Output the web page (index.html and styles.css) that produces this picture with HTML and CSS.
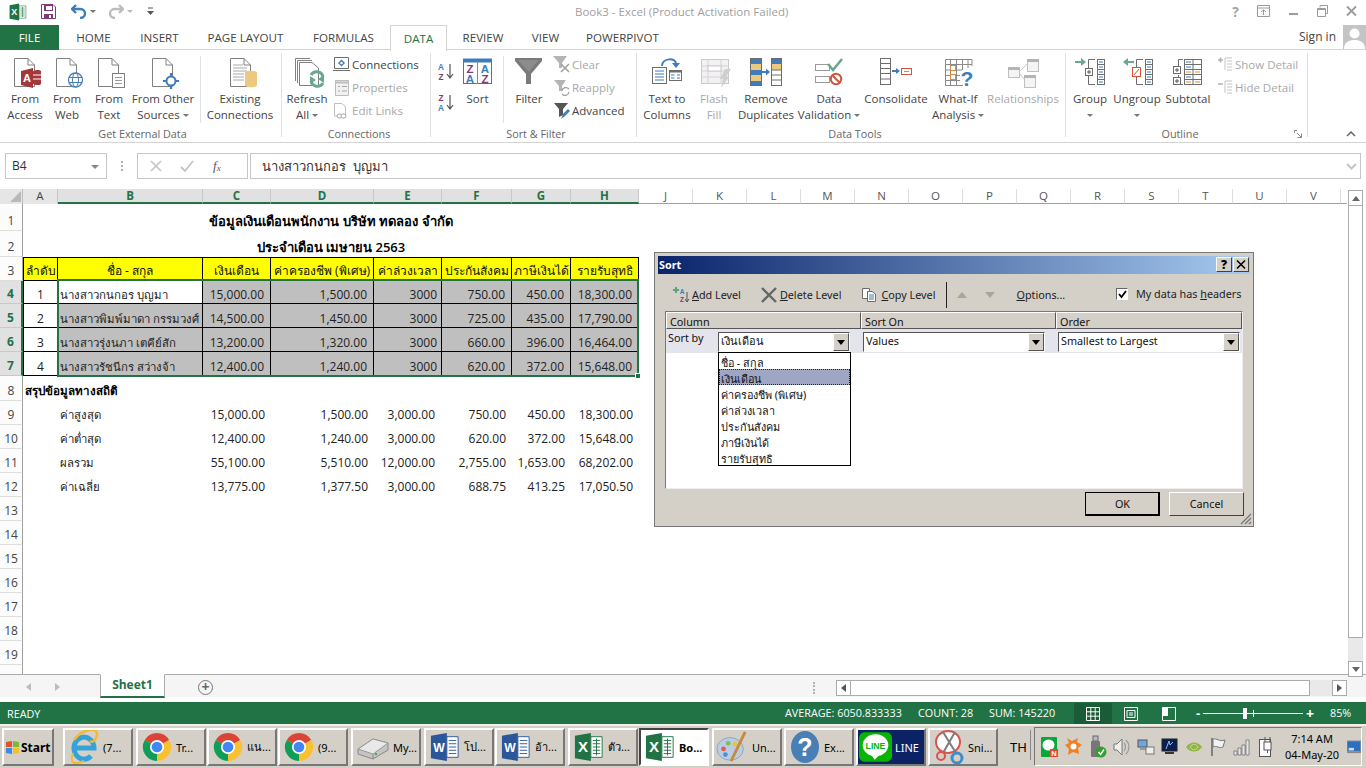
FILE: index.html
```html
<!DOCTYPE html>
<html lang="th">
<head>
<meta charset="utf-8">
<title>Book3 - Excel</title>
<link rel="stylesheet" href="styles.css">
</head>
<body>
<svg class="defs" width="0" height="0">
  <defs>
    <symbol id="chrome" viewBox="0 0 32 32">
      <path d="M16 16 3 8.5A15 15 0 0 1 29 8.5Z" fill="#db4437"/>
      <path d="M16 16 29 8.5A15 15 0 0 1 16 31Z" fill="#fbc02d"/>
      <path d="M16 16 16 31A15 15 0 0 1 3 8.5Z" fill="#0f9d58"/>
      <circle cx="16" cy="16" r="7.5" fill="#fff"/>
      <circle cx="16" cy="16" r="5.7" fill="#4285f4"/>
    </symbol>
    <symbol id="word" viewBox="0 0 32 32">
      <path d="M1 4 18 1V31L1 28Z" fill="#2b579a"/>
      <path d="M18 5H30V27H18Z" fill="#fff" stroke="#2b579a"/>
      <path d="M20 9H28M20 12.500H28M20 16H28M20 19.500H28M20 23H28" stroke="#2b579a"/>
      <text x="9.500" y="21" class="ico-b" font-size="13" fill="#fff" text-anchor="middle">W</text>
    </symbol>
    <symbol id="xl" viewBox="0 0 32 32">
      <path d="M1 4 18 1V31L1 28Z" fill="#217346"/>
      <path d="M18 5H30V27H18Z" fill="#fff" stroke="#217346"/>
      <path d="M20 9H28M20 12.500H28M20 16H28M20 19.500H28M20 23H28M24 7V25" stroke="#217346"/>
      <text x="9.500" y="21.500" class="ico-b" font-size="16" fill="#fff" text-anchor="middle">X</text>
    </symbol>
    <symbol id="doc" viewBox="0 0 21 29">
      <path d="M.5.500H14L20.500 7V28.500H.5Z" fill="#fff" stroke="#808080"/>
      <path d="M14 .5V7H20.500" fill="none" stroke="#808080"/>
    </symbol>
  </defs>
</svg>

<header class="titlebar">
  <div class="qat">
    <svg class="q-xl" width="18" height="18" viewBox="0 0 32 32"><use href="#xl"/></svg>
    <svg class="q-save" width="15" height="15" viewBox="0 0 15 15"><path d="M.5.500H12L14.500 3V14.500H.5Z" fill="#fff" stroke="#80397b"/><path d="M1 1H12V7H3V1ZM3 10H12V14.500H3Z" fill="#80397b"/><rect x="5" y="2" width="6" height="4" fill="#fff"/><rect x="8" y="11" width="2" height="3" fill="#fff"/></svg>
    <svg class="q-undo" width="16" height="15" viewBox="0 0 16 15"><path d="M5 1 1 5 5 9M1.500 5H9C13 5 14 8 14 9.500 14 12 12 14 9 14" fill="none" stroke="#3f7cbc" stroke-width="2.400"/></svg>
    <i class="caret q-c1"></i>
    <svg class="q-redo" width="16" height="15" viewBox="0 0 16 15"><path d="M11 1 15 5 11 9M14.500 5H7C3 5 2 8 2 9.500 2 12 4 14 7 14" fill="none" stroke="#bdbdbd" stroke-width="2.400"/></svg>
    <i class="caret q-c2 off"></i>
    <svg class="q-cust" width="7" height="9" viewBox="0 0 7 9"><path d="M1 1H6" stroke="#555"/><path d="M0 4H7L3.500 8Z" fill="#555"/></svg>
  </div>
  <div class="doc-title">Book3 - Excel (Product Activation Failed)</div>
  <div class="winctl">
    <span class="help">?</span>
    <svg width="13" height="12" viewBox="0 0 13 12"><path d="M.5.500H12.500V11.500H.5ZM.5 3H12.500M6.500 10V5M4 7 6.500 4.800 9 7" fill="none" stroke="#9b9b9b"/></svg>
    <svg width="11" height="12" viewBox="0 0 11 12"><path d="M1 9H10" stroke="#9b9b9b" stroke-width="2"/></svg>
    <svg width="11" height="12" viewBox="0 0 11 12"><path d="M3 2.500V.5H10.500V8.500H8.500M.5 3.500H8.500V11.500H.5ZM.5 4.500H8.500" fill="none" stroke="#9b9b9b"/></svg>
    <svg width="11" height="12" viewBox="0 0 11 12"><path d="M1 1.500 10 10.500M10 1.500 1 10.500" stroke="#9b9b9b" stroke-width="1.800"/></svg>
  </div>
</header>

<nav class="tabs">
  <div class="tab t-file">FILE</div>
  <div class="tab t-home">HOME</div>
  <div class="tab t-ins">INSERT</div>
  <div class="tab t-pl">PAGE LAYOUT</div>
  <div class="tab t-form">FORMULAS</div>
  <div class="tab t-data">DATA</div>
  <div class="tab t-rev">REVIEW</div>
  <div class="tab t-view">VIEW</div>
  <div class="tab t-pp">POWERPIVOT</div>
  <div class="signin">Sign in</div>
  <svg class="avatar" width="23" height="24" viewBox="0 0 23 24"><rect width="23" height="24" fill="#c4c4c4"/><circle cx="11.500" cy="8.500" r="5" fill="#fff"/><path d="M1 24C1 17 6 15 11.500 15S22 17 22 24Z" fill="#fff"/></svg>
</nav>

<section class="ribbon">
  <div class="group g1">
    <div class="gbody">
      <div class="big w42"><svg width="42" height="38" viewBox="4 53 42 38"><use href="#doc" x="14" y="58" width="21" height="29"/><path d="M33 71H41V84H33Z" fill="#fff"/><path d="M33 71.500C35 69.500 41 69.500 41 71.500V83.500C41 85.500 35 85.500 33 83.500Z" fill="#a4373a"/><path d="M33 75 41 75M33 79 41 79" stroke="#fff"/><path d="M21 71 33 68V88L21 85Z" fill="#a4373a"/><text x="27" y="82" class="ico-b" font-size="11" fill="#fff" text-anchor="middle">A</text></svg><span>From<br>Access</span></div>
      <div class="big w42"><svg width="42" height="38" viewBox="46 53 42 38"><use href="#doc" x="56" y="58" width="21" height="29"/><circle cx="75.500" cy="80" r="7" fill="#fff" stroke="#4a7fb5" stroke-width="1.300"/><ellipse cx="75.500" cy="80" rx="3" ry="7" fill="none" stroke="#4a7fb5"/><path d="M69 77.500H82M69 82.500H82" stroke="#4a7fb5"/></svg><span>From<br>Web</span></div>
      <div class="big w42"><svg width="42" height="38" viewBox="88 53 42 38"><use href="#doc" x="98" y="58" width="21" height="29"/><rect x="112.500" y="73.500" width="12" height="14" fill="#fff" stroke="#808080"/><path d="M115 77.500H122M115 80.500H122M115 83.500H122" stroke="#9a9a9a"/></svg><span>From<br>Text</span></div>
      <div class="big w66"><svg width="66" height="38" viewBox="130 53 66 38"><use href="#doc" x="152" y="58" width="21" height="29"/><circle cx="171" cy="81" r="4.500" fill="#fff" stroke="#3f7cbc" stroke-width="2"/><path d="M163 81H167M175 81H179M171 73V77M171 85V89" stroke="#3f7cbc" stroke-width="2.200"/></svg><span>From Other<br>Sources<i class="caret"></i></span></div>
      <div class="vsep s1"></div>
      <div class="big w72"><svg width="72" height="38" viewBox="204 53 72 38"><use href="#doc" x="230" y="58" width="21" height="29"/><path d="M233 65H243M233 68H247M233 71H247M233 74H244M233 77H244M233 80H244" stroke="#a8a8a8"/><path d="M245 73C245 70 257 70 257 73V85C257 88 245 88 245 85Z" fill="#edc87e"/></svg><span>Existing<br>Connections</span></div>
    </div>
    <div class="glabel">Get External Data</div>
  </div>

  <div class="group g2">
    <div class="gbody">
      <div class="big w38"><svg width="38" height="38" viewBox="288 53 38 38"><path d="M295.500 58.500H310M297.500 60.500H312M295.500 58.500V81M297.500 60.500V83" fill="none" stroke="#808080"/><path d="M299.500 62.500H312L318.500 68V85.500H299.500Z" fill="#fff" stroke="#808080"/><path d="M311 75A6.500 6.500 0 0 1 323 77" fill="none" stroke="#6aa78e" stroke-width="3"/><path d="M324 83 324 75 318 79Z" fill="#6aa78e"/><path d="M323 83A6.500 6.500 0 0 1 311 81" fill="none" stroke="#6aa78e" stroke-width="3"/><path d="M310 76V84L316 80Z" fill="#6aa78e"/></svg><span>Refresh<br>All<i class="caret"></i></span></div>
      <div class="small-col">
        <div class="sm"><svg width="19" height="18" viewBox="0 0 19 18"><path d="M1.500 1.500H15.500V12.500H1.500ZM0 14.500H17" fill="#fff" stroke="#6d6d6d"/><path d="M8.500 3.500 12 7 8.500 10.500 5 7Z" fill="#3f7cbc"/><circle cx="8.500" cy="7" r="1.300" fill="#fff"/></svg>Connections</div>
        <div class="sm off"><svg width="19" height="18" viewBox="0 0 19 18"><path d="M2.500 1.500H15.500V16.500H2.500Z" fill="#f1f1f1" stroke="#bdbdbd"/><path d="M2.500 3.500H15.500" stroke="#bdbdbd" stroke-width="2"/><path d="M5 7.500H7M9 7.500H14M5 12H7M9 12H14" stroke="#a8a8a8"/></svg>Properties</div>
        <div class="sm off"><svg class="ind" width="15" height="18" viewBox="0 0 15 18"><path d="M1.500 1.500H9L12.500 5V14H1.500Z" fill="#fff" stroke="#bdbdbd"/><rect x="4" y="12" width="5" height="4" rx="2" fill="#fff" stroke="#a8a8a8"/><rect x="8" y="12" width="5" height="4" rx="2" fill="#fff" stroke="#a8a8a8"/></svg>Edit Links</div>
      </div>
    </div>
    <div class="glabel">Connections</div>
  </div>

  <div class="group g3">
    <div class="gbody">
      <div class="az-col">
        <svg width="22" height="18" viewBox="0 0 22 18"><text x="5" y="7" class="ico-m" font-size="8.200" fill="#3f7cbc" text-anchor="middle">A</text><text x="5" y="16.500" class="ico-m" font-size="8.200" fill="#80397b" text-anchor="middle">Z</text><path d="M14 1V14M11 11 14 15 17 11" fill="none" stroke="#555" stroke-width="1.200"/></svg>
        <svg width="22" height="18" viewBox="0 0 22 18"><text x="5" y="7" class="ico-m" font-size="8.200" fill="#80397b" text-anchor="middle">Z</text><text x="5" y="16.500" class="ico-m" font-size="8.200" fill="#3f7cbc" text-anchor="middle">A</text><path d="M14 1V14M11 11 14 15 17 11" fill="none" stroke="#555" stroke-width="1.200"/></svg>
      </div>
      <div class="big w39"><svg width="39" height="38" viewBox="458 53 39 38"><rect x="463.500" y="59.500" width="28" height="24" fill="#fff" stroke="#6d6d6d"/><rect x="463" y="58.500" width="29" height="4" fill="#3f7cbc"/><path d="M477.500 62V84" stroke="#8a8a8a"/><text x="470" y="72.500" class="ico-m" font-size="11.500" fill="#80397b" text-anchor="middle">Z</text><text x="470" y="82.500" class="ico-m" font-size="11.500" fill="#3f7cbc" text-anchor="middle">A</text><text x="485" y="72.500" class="ico-m" font-size="11.500" fill="#3f7cbc" text-anchor="middle">A</text><text x="485" y="82.500" class="ico-m" font-size="11.500" fill="#80397b" text-anchor="middle">Z</text></svg><span>Sort</span></div>
      <div class="vsep s2"></div>
      <div class="big w42"><svg width="42" height="38" viewBox="508 53 42 38"><path d="M515 58H542V61L531 74V84H526V74L515 61Z" fill="#7a7a7a"/><path d="M518 60H539L529 71 528 71Z" fill="#8c8c8c"/></svg><span>Filter</span></div>
      <div class="small-col c3">
        <div class="sm off"><svg width="19" height="20" viewBox="0 0 19 20"><path d="M0 1H14L9 8V13H6V8Z" fill="#b4b4b4"/><path d="M8 9 16 17M16 9 8 17" stroke="#a0a0a0" stroke-width="1.600"/></svg>Clear</div>
        <div class="sm off"><svg width="19" height="20" viewBox="0 0 19 20"><path d="M1 2H13L9 8V13H6V8Z" fill="#b4b4b4"/><path d="M9 13A4 4 0 0 1 16 11M16 14A4 4 0 0 1 9 16" fill="none" stroke="#a0a0a0" stroke-width="1.300"/></svg>Reapply</div>
        <div class="sm"><svg width="19" height="20" viewBox="0 0 19 20"><path d="M1 2H15L10 8V14L6 16V8Z" fill="#555"/><path d="M8 18 10 13 15 8 17 10 12 15Z" fill="#3f7cbc"/></svg>Advanced</div>
      </div>
    </div>
    <div class="glabel">Sort &amp; Filter</div>
  </div>

  <div class="group g4">
    <div class="gbody">
      <div class="big w44"><svg width="44" height="38" viewBox="645 53 44 38"><rect x="652.500" y="67.500" width="14" height="16" fill="#fff" stroke="#6d6d6d"/><path d="M655 71H664M655 74H664M655 77H664M655 80H664" stroke="#3f7cbc"/><path d="M662 66C662 58 676 57 676 64" fill="none" stroke="#3f7cbc" stroke-width="2"/><path d="M672 63H680L676 68Z" fill="#3f7cbc"/><rect x="669.500" y="70.500" width="12" height="10" fill="#fff" stroke="#6d6d6d"/><rect x="669.500" y="70.500" width="12" height="2" fill="#6d6d6d"/><path d="M671 75H674.500M677 75H680M671 78H674.500M677 78H680" stroke="#3f7cbc"/></svg><span>Text to<br>Columns</span></div>
      <div class="big w50 dis"><svg width="50" height="38" viewBox="689 53 50 38"><rect x="701.500" y="59.500" width="27" height="24" fill="#f4f1f4" stroke="#c9c9c9"/><path d="M701 66H729M701 71H729M701 77H729M708 59V84M721 59V84" stroke="#d6d2d6"/><rect x="708" y="66" width="13" height="5" fill="#fff" stroke="#c9c9c9"/><path d="M725 69H731L726 77H729L721 88 723 79H720Z" fill="#cfcfcf"/></svg><span>Flash<br>Fill</span></div>
      <div class="big w54"><svg width="54" height="38" viewBox="739 53 54 38"><rect x="750.500" y="58.500" width="11" height="27" fill="#fff" stroke="#6d6d6d"/><path d="M751 59H761V64H751ZM751 70H761V75H751ZM751 81H761V85H751Z" fill="#3f7cbc"/><path d="M751 64H761V70H751ZM751 75H761V81H751Z" fill="#edc87e"/><path d="M762 72H767" stroke="#3f7cbc" stroke-width="2"/><path d="M766 68.500 770 72 766 75.500Z" fill="#3f7cbc"/><rect x="771.500" y="58.500" width="10" height="27" fill="#fff" stroke="#6d6d6d"/><path d="M772 59H781V64H772Z" fill="#3f7cbc"/><path d="M772 64H781V70H772Z" fill="#edc87e"/><path d="M772 70H781M772 75H781M772 80H781" stroke="#6d6d6d"/></svg><span>Remove<br>Duplicates</span></div>
      <div class="big w72"><svg width="72" height="38" viewBox="793 53 72 38"><rect x="815.500" y="64.500" width="14" height="6" fill="#fff" stroke="#9a9a9a"/><rect x="815.500" y="76.500" width="14" height="6" fill="#fff" stroke="#9a9a9a"/><path d="M828 64 833 70 842 59" fill="none" stroke="#6aa78e" stroke-width="2.600"/><circle cx="836" cy="79" r="5.200" fill="#fff" stroke="#d2553a" stroke-width="2"/><path d="M832.500 75.500 839.500 82.500" stroke="#d2553a" stroke-width="2"/></svg><span>Data<br>Validation<i class="caret"></i></span></div>
      <div class="big w62"><svg width="62" height="38" viewBox="865 53 62 38"><rect x="880.500" y="58.500" width="10" height="26" fill="#fff" stroke="#6d6d6d"/><path d="M881 63.500H890M881 68.500H890M881 73.500H890M881 79H890" stroke="#6d6d6d"/><path d="M892 71H897" stroke="#3f7cbc" stroke-width="2"/><path d="M896 68 900 71 896 74Z" fill="#3f7cbc"/><rect x="901.500" y="68.500" width="10" height="6" fill="#fff" stroke="#d2553a"/><path d="M904 71.500H909" stroke="#999"/></svg><span>Consolidate</span></div>
      <div class="big w62"><svg width="62" height="38" viewBox="927 53 62 38"><path d="M945.500 59.500H972V66M945.500 59.500V85.500H963M950.500 60V85M956.500 60V85M962.500 60V70M968 60V68M946 64.500H972M946 70H962M946 75.500H960M946 80.500H960" fill="none" stroke="#8a8a8a"/><rect x="950.500" y="65.500" width="5" height="5" fill="#fff" stroke="#e08a3c"/><rect x="950.500" y="74.500" width="5" height="5" fill="#fff" stroke="#e08a3c"/><text x="967" y="86" class="ico-b" font-size="21" fill="#3f7cbc" text-anchor="middle">?</text></svg><span>What-If<br>Analysis<i class="caret"></i></span></div>
      <div class="big w68 dis"><svg width="68" height="38" viewBox="989 53 68 38"><rect x="1008.500" y="67.500" width="11" height="10" fill="#f4f4f4" stroke="#c0c0c0"/><rect x="1008" y="67" width="12" height="3" fill="#b4b4b4"/><rect x="1027.500" y="59.500" width="11" height="12" fill="#f4f4f4" stroke="#c0c0c0"/><rect x="1027" y="59" width="12" height="3" fill="#b4b4b4"/><rect x="1024.500" y="75.500" width="11" height="12" fill="#f4f4f4" stroke="#c0c0c0"/><rect x="1024" y="75" width="12" height="3" fill="#b4b4b4"/><path d="M1020 71 1027 64M1020 74 1024 79" stroke="#c9c9c9"/></svg><span>Relationships</span></div>
    </div>
    <div class="glabel">Data Tools</div>
  </div>

  <div class="group g5">
    <div class="gbody">
      <div class="big w40"><svg width="40" height="38" viewBox="1070 53 40 38"><path d="M1075 62H1083" stroke="#6aa78e" stroke-width="2"/><path d="M1081 58 1086 62 1081 66Z" fill="#6aa78e"/><path d="M1095 59.500H1088.500V68M1088.500 75V84.500H1095" fill="none" stroke="#6d6d6d"/><rect x="1085.500" y="68.500" width="7" height="7" fill="#fff" stroke="#6d6d6d"/><path d="M1087 72H1091M1089 70V74" stroke="#555"/><rect x="1097.500" y="59.500" width="7" height="25" fill="#fff" stroke="#6d6d6d"/><path d="M1098 64.500H1104M1098 69.500H1104M1098 74.500H1104M1098 79.500H1104" stroke="#6d6d6d"/><path d="M1099 62H1103M1099 67H1103M1099 72H1103M1099 77H1103M1099 82H1103" stroke="#3f7cbc"/></svg><span>Group<br><i class="caret solo"></i></span></div>
      <div class="big w54"><svg width="54" height="38" viewBox="1110 53 54 38"><path d="M1126 62H1134" stroke="#6aa78e" stroke-width="2"/><path d="M1128 58 1123 62 1128 66Z" fill="#6aa78e"/><path d="M1143 59.500H1136.500V67M1136.500 76V84.500H1143" fill="none" stroke="#6d6d6d"/><rect x="1132.500" y="67.500" width="8" height="9" fill="#fff" stroke="#d2553a"/><path d="M1134 75 1139 69" stroke="#d2553a"/><rect x="1145.500" y="59.500" width="7" height="25" fill="#fff" stroke="#6d6d6d"/><path d="M1146 64.500H1152M1146 69.500H1152M1146 74.500H1152M1146 79.500H1152" stroke="#6d6d6d"/><path d="M1147 62H1151M1147 67H1151M1147 72H1151M1147 77H1151M1147 82H1151" stroke="#3f7cbc"/></svg><span>Ungroup<br><i class="caret solo"></i></span></div>
      <div class="big w48"><svg width="48" height="38" viewBox="1164 53 48 38"><path d="M1183 59.500H1178.500V68M1178.500 75V78M1178.500 84.500H1183" fill="none" stroke="#6d6d6d"/><rect x="1173.500" y="66.500" width="7" height="7" fill="#fff" stroke="#6d6d6d"/><rect x="1173.500" y="77.500" width="7" height="7" fill="#fff" stroke="#6d6d6d"/><path d="M1175 70H1179M1177 68V72M1175 81H1179M1177 79V83" stroke="#555"/><rect x="1184.500" y="59.500" width="17" height="25" fill="#fff" stroke="#6d6d6d"/><path d="M1193 60V84M1185 64.500H1201M1185 69.500H1201M1185 74.500H1201M1185 79.500H1201" stroke="#6d6d6d"/><path d="M1186 62H1191M1186 67H1191M1186 77H1191" stroke="#3f7cbc"/><path d="M1186 72H1191M1195 72H1200M1186 82H1191M1195 82H1200" stroke="#e08a3c"/></svg><span>Subtotal</span></div>
      <div class="small-col c5">
        <div class="sm off"><svg width="18" height="18" viewBox="0 0 18 18"><path d="M1 4H6M3.500 1.500V6.500" stroke="#b0b0b0" stroke-width="1.500"/><path d="M8 2H15M10 5H15M10 8H15M10 11H15M10 14H15M8 2V14" stroke="#c4c4c4"/></svg>Show Detail</div>
        <div class="sm off"><svg width="18" height="18" viewBox="0 0 18 18"><path d="M1 5H6" stroke="#b0b0b0" stroke-width="1.500"/><path d="M8 2H15M10 5H15M10 8H15M10 11H15M10 14H15M8 2V14" stroke="#c4c4c4"/></svg>Hide Detail</div>
      </div>
    </div>
    <div class="glabel l5">Outline<svg class="launch" width="8" height="8" viewBox="0 0 8 8"><path d="M.5 3V.5H3M7.500 7.500 3 3M7.500 3.500V7.500H3.500" fill="none" stroke="#8a8a8a"/></svg></div>
  </div>
  <svg class="collapse" width="10" height="6" viewBox="0 0 10 6"><path d="M1 5 5 1 9 5" fill="none" stroke="#666" stroke-width="1.500"/></svg>
</section>

<section class="fbar">
  <div class="namebox">B4<i class="caret dark"></i></div>
  <div class="fdots"></div>
  <div class="fxbox">
    <svg width="12" height="12" viewBox="0 0 12 12"><path d="M1 1 11 11M11 1 1 11" stroke="#c4c4c4" stroke-width="1.600"/></svg>
    <svg width="14" height="12" viewBox="0 0 14 12"><path d="M1 7 5 11 13 1" fill="none" stroke="#c4c4c4" stroke-width="1.800"/></svg>
    <span class="fx">f<sub>x</sub></span>
  </div>
  <div class="finput">นางสาวกนกอร&nbsp;&nbsp;บุญมา<svg class="fexp" width="11" height="7" viewBox="0 0 11 7"><path d="M1 1 5.500 5.500 10 1" fill="none" stroke="#c4c4c4" stroke-width="2"/></svg></div>
</section>

<main class="book">
  <div class="sheet">
    <div class="colhead">
      <div class="corner"><svg width="12" height="12" viewBox="0 0 12 12"><path d="M12 1V12H1Z" fill="#b8b8b8"/></svg></div>
      <div class="ch">A</div><div class="ch on">B</div><div class="ch on">C</div><div class="ch on">D</div><div class="ch on">E</div><div class="ch on">F</div><div class="ch on">G</div><div class="ch on">H</div>
      <div class="ch lt">J</div><div class="ch lt">K</div><div class="ch lt">L</div><div class="ch lt">M</div><div class="ch lt">N</div><div class="ch lt">O</div><div class="ch lt">P</div><div class="ch lt">Q</div><div class="ch lt">R</div><div class="ch lt">S</div><div class="ch lt">T</div><div class="ch lt">U</div><div class="ch lt">V</div><div class="ch lt"></div>
    </div>

    <div class="row h27"><div class="rh">1</div><div class="cell merged strong">ข้อมูลเงินเดือนพนักงาน บริษัท ทดลอง จำกัด</div></div>
    <div class="row h26"><div class="rh">2</div><div class="cell merged strong">ประจำเดือน เมษายน 2563</div></div>
    <div class="row h24"><div class="rh">3</div><div class="cell th first">ลำดับ</div><div class="cell th">ชื่อ - สกุล</div><div class="cell th">เงินเดือน</div><div class="cell th">ค่าครองชีพ (พิเศษ)</div><div class="cell th">ค่าล่วงเวลา</div><div class="cell th">ประกันสังคม</div><div class="cell th">ภาษีเงินได้</div><div class="cell th">รายรับสุทธิ</div></div>
    <div class="row h23"><div class="rh sel">4</div><div class="cell td first mid">1</div><div class="cell td txt">นางสาวกนกอร บุญมา</div><div class="cell td gr num">15,000.00</div><div class="cell td gr num">1,500.00</div><div class="cell td gr gen">3000</div><div class="cell td gr num">750.00</div><div class="cell td gr num">450.00</div><div class="cell td gr num">18,300.00</div></div>
    <div class="row h24"><div class="rh sel">5</div><div class="cell td first mid">2</div><div class="cell td gr txt">นางสาวพิมพ์มาดา กรรมวงศ์</div><div class="cell td gr num">14,500.00</div><div class="cell td gr num">1,450.00</div><div class="cell td gr gen">3000</div><div class="cell td gr num">725.00</div><div class="cell td gr num">435.00</div><div class="cell td gr num">17,790.00</div></div>
    <div class="row h24"><div class="rh sel">6</div><div class="cell td first mid">3</div><div class="cell td gr txt">นางสาวรุ่งนภา เตคีย์สัก</div><div class="cell td gr num">13,200.00</div><div class="cell td gr num">1,320.00</div><div class="cell td gr gen">3000</div><div class="cell td gr num">660.00</div><div class="cell td gr num">396.00</div><div class="cell td gr num">16,464.00</div></div>
    <div class="row h24"><div class="rh sel">7</div><div class="cell td first mid">4</div><div class="cell td gr txt">นางสาวรัชนีกร สว่างจ้า</div><div class="cell td gr num">12,400.00</div><div class="cell td gr num">1,240.00</div><div class="cell td gr gen">3000</div><div class="cell td gr num">620.00</div><div class="cell td gr num">372.00</div><div class="cell td gr num">15,648.00</div></div>
    <div class="row h25"><div class="rh">8</div><div class="cell wide strong">สรุปข้อมูลทางสถิติ</div></div>
    <div class="row h24"><div class="rh">9</div><div class="cell"></div><div class="cell txt">ค่าสูงสุด</div><div class="cell num">15,000.00</div><div class="cell num">1,500.00</div><div class="cell num e">3,000.00</div><div class="cell num">750.00</div><div class="cell num">450.00</div><div class="cell num">18,300.00</div></div>
    <div class="row h24"><div class="rh">10</div><div class="cell"></div><div class="cell txt">ค่าต่ำสุด</div><div class="cell num">12,400.00</div><div class="cell num">1,240.00</div><div class="cell num e">3,000.00</div><div class="cell num">620.00</div><div class="cell num">372.00</div><div class="cell num">15,648.00</div></div>
    <div class="row h24"><div class="rh">11</div><div class="cell"></div><div class="cell txt">ผลรวม</div><div class="cell num">55,100.00</div><div class="cell num">5,510.00</div><div class="cell num e">12,000.00</div><div class="cell num">2,755.00</div><div class="cell num">1,653.00</div><div class="cell num">68,202.00</div></div>
    <div class="row h24"><div class="rh">12</div><div class="cell"></div><div class="cell txt">ค่าเฉลี่ย</div><div class="cell num">13,775.00</div><div class="cell num">1,377.50</div><div class="cell num e">3,000.00</div><div class="cell num">688.75</div><div class="cell num">413.25</div><div class="cell num">17,050.50</div></div>
    <div class="row h24"><div class="rh">13</div></div>
    <div class="row h24"><div class="rh">14</div></div>
    <div class="row h24"><div class="rh">15</div></div>
    <div class="row h24"><div class="rh">16</div></div>
    <div class="row h24"><div class="rh">17</div></div>
    <div class="row h24"><div class="rh">18</div></div>
    <div class="row h24"><div class="rh">19</div></div>
    <div class="row h24"><div class="rh"></div></div>

    <div class="selection"><i class="handle"></i></div>
  </div>
  <aside class="vscroll">
    <div class="sb-btn"><i class="tri up"></i></div>
    <div class="sb-thumb"></div>
    <div class="sb-track"></div>
    <div class="sb-btn"><i class="tri down"></i></div>
  </aside>
</main>

<section class="sheetbar">
  <div class="navs"><i class="tri left"></i><i class="tri right"></i></div>
  <div class="stab">Sheet1</div>
  <div class="addsheet">+</div>
  <div class="hdots"></div>
  <div class="hscroll">
    <div class="sb-btn h"><i class="tri left dk"></i></div>
    <div class="h-thumb"></div>
    <div class="h-track"></div>
    <div class="sb-btn h"><i class="tri right dk"></i></div>
  </div>
</section>

<footer class="status">
  <span class="ready">READY</span>
  <span class="st st-a">AVERAGE: 6050.833333</span>
  <span class="st st-c">COUNT: 28</span>
  <span class="st st-s">SUM: 145220</span>
  <div class="view on"><svg width="14" height="14" viewBox="0 0 14 14"><path d="M.5.500H13.500V13.500H.5ZM4.800.5V13.500M9.200.5V13.500M.5 4.800H13.500M.5 9.200H13.500" fill="none" stroke="#fff"/></svg></div>
  <div class="view v2"><svg width="14" height="14" viewBox="0 0 14 14"><path d="M.5.500H13.500V13.500H.5Z" fill="none" stroke="#fff"/><path d="M3 3.500H11V10.500H3ZM5 6H9M5 8H9" fill="none" stroke="#fff"/></svg></div>
  <div class="view v3"><svg width="14" height="14" viewBox="0 0 14 14"><path d="M.5.500H13.500V13.500H.5Z" fill="none" stroke="#fff"/><path d="M1 1H6V9H1Z" fill="#fff"/></svg></div>
  <div class="zoom">
    <span class="zm">-</span>
    <div class="slider"><i class="mark"></i><i class="knob"></i></div>
    <span class="zp">+</span>
  </div>
  <span class="pct">85%</span>
</footer>

<section class="taskbar">
  <div class="tb start"><svg width="15" height="15" viewBox="0 0 15 15"><path d="M1 2 7 1V7H1Z" fill="#e0532d"/><path d="M8 1 14 2V7H8Z" fill="#7ab93b"/><path d="M1 8H7V14L1 13Z" fill="#3f8ae0"/><path d="M8 8H14V13L8 14Z" fill="#f4c12d"/></svg>Start</div>
  <div class="tb m9"><svg width="30" height="36" viewBox="0 0 30 36"><path d="M5.500 19H25A10 11 0 1 0 22 27" fill="none" stroke="#35a3d9" stroke-width="5"/><path d="M5 11C13 0 29-3 28 6 27 11 24 14 21 12" fill="none" stroke="#f3b92f" stroke-width="2.400"/><path d="M4 24C0 35 6 36 15 32" fill="none" stroke="#f3b92f" stroke-width="2"/></svg><span>(7...</span></div>
  <div class="tb m3"><svg width="30" height="32" viewBox="0 0 32 32"><use href="#chrome"/></svg><span>Tr...</span></div>
  <div class="tb m1"><svg width="30" height="32" viewBox="0 0 32 32"><use href="#chrome"/></svg><span>แน...</span></div>
  <div class="tb m1"><svg width="30" height="32" viewBox="0 0 32 32"><use href="#chrome"/></svg><span>(9...</span></div>
  <div class="tb m3"><svg width="32" height="26" viewBox="0 0 32 26"><path d="M1 15 16 5 31 9V16L16 25 1 20Z" fill="#c4c4c4" stroke="#888"/><path d="M1 15 16 20 31 9 16 5Z" fill="#e8e8e8" stroke="#999"/><path d="M16 20V25" stroke="#888"/><rect x="18" y="19" width="2" height="2" fill="#35b03c"/></svg><span>My...</span></div>
  <div class="tb m3"><svg width="30" height="32" viewBox="0 0 32 32"><use href="#word"/></svg><span>โป...</span></div>
  <div class="tb m1"><svg width="30" height="32" viewBox="0 0 32 32"><use href="#word"/></svg><span>อ้า...</span></div>
  <div class="tb m3"><svg width="30" height="32" viewBox="0 0 32 32"><use href="#xl"/></svg><span>ตัว...</span></div>
  <div class="tb m1 active"><svg width="30" height="32" viewBox="0 0 32 32"><use href="#xl"/></svg><span>Bo...</span></div>
  <div class="tb m3 tight"><svg width="32" height="36" viewBox="0 0 34 36"><ellipse cx="15" cy="20" rx="14" ry="12" fill="#b9cde4" stroke="#8aa4c2"/><circle cx="8" cy="20" r="2.500" fill="#e65b4d"/><circle cx="13" cy="14" r="2.500" fill="#7fbf4d"/><circle cx="20" cy="15" r="2.500" fill="#f1c13b"/><circle cx="10" cy="26" r="2.500" fill="#4c8fd6"/><path d="M31 2 16 33" stroke="#c98a3c" stroke-width="3"/></svg><span>Un...</span></div>
  <div class="tb m2"><svg width="30" height="34" viewBox="0 0 30 34"><ellipse cx="15" cy="17" rx="14" ry="16" fill="#4a7fb5"/><text x="15" y="26" class="ico-b" font-size="25" fill="#fff" text-anchor="middle">?</text></svg><span>Ex...</span></div>
  <div class="tb m2 line"><svg class="ln" width="33" height="32" viewBox="0 0 36 32"><rect width="36" height="32" rx="6" fill="#06b500"/><ellipse cx="18" cy="14" rx="14" ry="12" fill="#fff"/><path d="M13 24 17 30 22 25Z" fill="#fff"/><text x="18" y="18" class="ico-b" font-size="9.500" fill="#06b500" text-anchor="middle">LINE</text></svg><span>LINE</span></div>
  <div class="tb m2"><svg width="30" height="36" viewBox="0 0 30 36"><ellipse cx="14" cy="13" rx="12" ry="11" fill="#fff" stroke="#d9534f" stroke-width="2"/><path d="M9 3 22 24M21 3 9 24" stroke="#7d7d7d" stroke-width="2"/><circle cx="7" cy="27" r="4" fill="none" stroke="#d9534f" stroke-width="2"/><circle cx="23" cy="29" r="5" fill="none" stroke="#3a8ecb" stroke-width="3"/></svg><span>Sni...</span></div>
  <div class="lang">TH</div>
  <div class="tray">
    <i class="ti"><svg width="18" height="22" viewBox="0 0 18 22"><rect y="1" width="16" height="20" rx="1" fill="#06a839"/><ellipse cx="7.500" cy="9" rx="6" ry="5.500" fill="#fff"/><rect x="9" y="13" width="8" height="8" fill="#e5492d"/><text x="13" y="20" class="ico-b" font-size="7.500" fill="#fff" text-anchor="middle">N</text></svg></i>
    <i class="ti"><svg width="18" height="20" viewBox="0 0 18 20"><path d="M2 1 7 4 13 1 12 5 17 8 13 11 14 17 8 15 3 18 4 12 0 8 4 6Z" fill="#f08021"/><circle cx="8.500" cy="9.500" r="3" fill="#fff"/></svg></i>
    <i class="ti"><svg width="18" height="24" viewBox="0 0 18 24"><rect x="4" y="1" width="5" height="5" fill="#bbb" stroke="#666"/><rect x="2" y="6" width="9" height="16" rx="1" fill="#777"/><circle cx="12" cy="17" r="5.500" fill="#2ea12e"/><path d="M9.500 17 11.500 19.500 15 14.500" fill="none" stroke="#fff" stroke-width="1.500"/></svg></i>
    <i class="ti"><svg width="18" height="20" viewBox="0 0 18 20"><path d="M1 7H4L9 2V18L4 13H1Z" fill="#eee" stroke="#777"/><path d="M11 6C13 8 13 12 11 14M13 3C17 7 17 13 13 17" fill="none" stroke="#999" stroke-width="1.200"/></svg></i>
    <i class="ti"><svg width="18" height="18" viewBox="0 0 18 18"><rect x="1" y="2" width="9" height="7" fill="#6fa6de" stroke="#555"/><rect x="3" y="10" width="6" height="2" fill="#999"/><rect x="9" y="9" width="8" height="7" fill="#eee" stroke="#777"/></svg></i>
    <i class="ti"><svg width="18" height="18" viewBox="0 0 18 18"><rect x="1" y="1" width="15" height="12" fill="#0b1e52" stroke="#222"/><rect x="4" y="14" width="9" height="2" fill="#333"/><path d="M5 11 8 3 9 7 12 4" stroke="#8fc0ee" fill="none"/></svg></i>
    <i class="ti"><svg width="18" height="14" viewBox="0 0 18 14"><path d="M1 7C5 1 13 1 17 7 13 13 5 13 1 7Z" fill="#8eb83d"/><path d="M5 7C8 3 11 4 13 7 11 10 8 11 5 7Z" fill="none" stroke="#d4d0c8"/></svg></i>
    <i class="ti"><svg width="16" height="20" viewBox="0 0 16 20"><path d="M2 1V19" stroke="#666" stroke-width="1.500"/><path d="M3 2C7 1 9 5 15 3L13 10C9 12 7 8 3 10Z" fill="#f2f2f2" stroke="#777"/></svg></i>
    <i class="ti"><svg width="18" height="18" viewBox="0 0 18 18"><path d="M1 13H4V17H1ZM5 10H8V17H5ZM9 7H12V17H9ZM13 2H16V17H13Z" fill="#e6e6e6" stroke="#666" stroke-width=".7"/></svg></i>
    <i class="ti"><svg width="16" height="22" viewBox="0 0 16 22"><rect x="1.500" y="3.500" width="11" height="17" fill="#fff" stroke="#555"/><rect x="6" y="6" width="7" height="8" fill="#fff" stroke="#555"/><path d="M7 1V6M12 1V6M9.500 14V17" stroke="#555"/></svg></i>
    <div class="clock"><div>7:14 AM</div><div>04-May-20</div></div>
    <svg class="desk" width="16" height="16" viewBox="0 0 16 16"><rect y="1" width="16" height="12" fill="#2a6fc0" stroke="#999"/><rect x="2" y="9" width="6" height="3" fill="#cde"/><rect y="13" width="16" height="2" fill="#888"/></svg>
  </div>
</section>

<div class="dialog">
  <div class="dlg-title"><span>Sort</span>
    <div class="dlg-btns"><b class="dlg-b">?</b><b class="dlg-b x"><svg width="10" height="9" viewBox="0 0 10 9"><path d="M1 .5 9 8.500M9 .5 1 8.500" stroke="#000" stroke-width="1.500"/></svg></b></div>
  </div>
  <div class="dlg-tools">
    <svg class="t-add" width="18" height="18" viewBox="0 0 18 18"><path d="M1 4H7M4 1V7" stroke="#5aa37c" stroke-width="2"/><path d="M15 6V16M13 13 15 16 17 13" fill="none" stroke="#555"/><text x="10" y="8" class="ico-m" font-size="6.500" fill="#3f7cbc" text-anchor="middle">A</text><text x="10" y="16" class="ico-m" font-size="6.500" fill="#80397b" text-anchor="middle">Z</text></svg>
    <span class="t-lab"><u>A</u>dd Level</span>
    <svg class="t-del" width="16" height="16" viewBox="0 0 16 16"><path d="M1 1 15 15M15 1 1 15" stroke="#666" stroke-width="2.400"/></svg>
    <span class="t-lab"><u>D</u>elete Level</span>
    <svg class="t-copy" width="15" height="15" viewBox="0 0 15 15"><path d="M.5 1.500H7.500V11.500H.5Z" fill="#fff" stroke="#6d6d6d"/><path d="M5.500 4.500H10L13.500 7V14.500H5.500Z" fill="#fff" stroke="#6d6d6d"/><path d="M7 8H12M7 10H12M7 12H12" stroke="#3f7cbc"/></svg>
    <span class="t-lab"><u>C</u>opy Level</span>
    <i class="t-sep"></i>
    <i class="tri t-up"></i>
    <i class="tri t-down"></i>
    <span class="t-lab t-opt"><u>O</u>ptions...</span>
    <i class="chk"><svg width="9" height="9" viewBox="0 0 9 9"><path d="M1 4 3.500 7 8 1" fill="none" stroke="#000" stroke-width="1.800"/></svg></i>
    <span class="t-lab t-hd">My data has <u>h</u>eaders</span>
  </div>
  <div class="dlg-list">
    <div class="dl-head"><div class="dh c1">Column</div><div class="dh c2">Sort On</div><div class="dh c3">Order</div></div>
    <div class="dl-row">
      <span class="sortby">Sort by</span>
      <div class="combo cb1"><span class="thai-s">เงินเดือน</span><b class="cb-arrow"><i class="tri down dk"></i></b></div>
      <div class="combo cb2"><span>Values</span><b class="cb-arrow"><i class="tri down dk"></i></b></div>
      <div class="combo cb3"><span>Smallest to Largest</span><b class="cb-arrow"><i class="tri down dk"></i></b></div>
    </div>
    <div class="droplist">
      <div class="opt">ชื่อ - สกุล</div>
      <div class="opt hot">เงินเดือน</div>
      <div class="opt">ค่าครองชีพ (พิเศษ)</div>
      <div class="opt">ค่าล่วงเวลา</div>
      <div class="opt">ประกันสังคม</div>
      <div class="opt">ภาษีเงินได้</div>
      <div class="opt">รายรับสุทธิ</div>
    </div>
  </div>
  <div class="dlg-foot">
    <div class="btn def">OK</div>
    <div class="btn">Cancel</div>
  </div>
  <svg class="grip" width="13" height="13" viewBox="0 0 13 13"><path d="M12 2 2 12M12 6 6 12M12 10 10 12" stroke="#777" stroke-width="1.300"/></svg>
</div>
</body>
</html>
```
FILE: styles.css
```css
* { box-sizing: border-box; }
html, body { margin: 0; padding: 0; }
body {
  width: 1366px; height: 768px; overflow: hidden; position: relative;
  display: flex; flex-direction: column; background: #fff;
  font: 12px "Open Sans", "Noto Sans", sans-serif; color: #444;
}
i { font-style: normal; display: inline-block; }
.defs { position: absolute; }
.ico-b { font-family: "Liberation Sans", sans-serif; font-weight: 700; }
.ico-m { font-family: "Liberation Sans", sans-serif; font-weight: 700; }

/* title bar */
.titlebar { height: 25px; display: flex; align-items: center; position: relative; flex: none; }
.qat { display: flex; align-items: center; padding-left: 9px; height: 25px; }
.q-xl { margin-top: -2px; }
.q-save { margin-left: 14px; margin-top: -3px; }
.q-undo { margin-left: 15px; margin-top: -3px; }
.q-c1 { margin-left: 6px; margin-top: -3px; }
.q-redo { margin-left: 12px; margin-top: -3px; }
.q-c2 { margin-left: 4px; margin-top: -3px; }
.q-cust { margin-left: 14px; margin-top: -2px; }
.caret { width: 0; height: 0; border: 3px solid transparent; border-top: 3px solid #777; border-bottom: 0; margin-left: 3px; vertical-align: 2px; }
.caret.off { border-top-color: #bbb; }
.caret.dark { position: absolute; right: 7px; top: 11px; border-width: 4px 4px 0; border-top-color: #888; }
.caret.solo { margin-left: 0; }
.doc-title { position: absolute; left: 575px; top: 4px; font-size: 11.5px; color: #a0a0a0; white-space: nowrap; }
.winctl { margin-left: auto; display: flex; align-items: center; gap: 18px; padding-right: 9px; margin-top: -3px; }
.winctl svg { display: block; }
.winctl .help { font: bold 14px "Open Sans", sans-serif; color: #a4a4a4; margin-right: 0; }

/* tabs */
.tabs { height: 25px; display: flex; flex: none; position: relative; border-bottom: 1px solid #d4d4d4; }
.tab { display: flex; align-items: center; justify-content: center; height: 25px; font-size: 11.6px; color: #444; white-space: nowrap; }
.t-file { width: 59px; background: #217346; color: #fff; }
.t-home { width: 69px; }
.t-ins { width: 63px; }
.t-pl { width: 109px; }
.t-form { width: 87px; margin-right: 3px; }
.t-data { width: 57px; height: 26px; color: #217346; background: #fff; border: 1px solid #d4d4d4; border-bottom: 0; position: relative; z-index: 1; }
.t-rev { width: 72px; }
.t-view { width: 53px; }
.t-pp { width: 101px; }
.signin { position: absolute; left: 1299px; top: 3px; line-height: 17px; color: #444; }
.avatar { position: absolute; left: 1343px; top: 0; }

/* ribbon */
.ribbon { height: 93px; flex: none; display: flex; padding-top: 3px; position: relative; border-bottom: 1px solid #d4d4d4; }
.group { height: 84px; display: flex; flex-direction: column; border-right: 1px solid #e1e1e1; flex: none; }
.gbody { height: 73px; display: flex; }
.glabel { height: 11px; line-height: 16px; text-align: center; font-size: 10.8px; color: #666; position: relative; white-space: nowrap; }
.g1 { width: 282px; padding-left: 4px; }
.g2 { width: 149px; padding-left: 6px; }
.g3 { width: 206px; padding-left: 5px; }
.g4 { width: 429px; padding-left: 8px; }
.g5 { width: 242px; padding-left: 4px; }
.l5 { padding-right: 17px; }
.launch { position: absolute; right: 5px; top: 4px; }
.big { display: flex; flex-direction: column; align-items: center; flex: none; font-size: 11.5px; line-height: 16px; color: #444; white-space: nowrap; text-align: center; }
.big svg { display: block; flex: none; }
.big.dis { color: #a8a8a8; }
.w38 { width: 38px; } .w39 { width: 39px; } .w40 { width: 40px; } .w42 { width: 42px; } .w44 { width: 44px; }
.w48 { width: 48px; } .w50 { width: 50px; } .w54 { width: 54px; } .w62 { width: 62px; } .w66 { width: 66px; }
.w68 { width: 68px; } .w72 { width: 72px; }
.vsep { width: 1px; height: 67px; margin-top: 3px; background: #e1e1e1; flex: none; }
.s1 { margin-left: 4px; margin-right: 3px; }
.s2 { margin-left: 6px; margin-right: 4px; }
.small-col { margin-left: 7px; display: flex; flex-direction: column; }
.small-col.c3 { margin-left: 3px; }
.small-col.c5 { margin-left: 5px; }
.sm { height: 23px; display: flex; align-items: center; white-space: nowrap; font-size: 11.5px; color: #444; }
.sm.off { color: #a8a8a8; }
.sm svg { flex: none; }
.sm .ind { margin: 0 4px 0 0; }
.az-col { width: 22px; display: flex; flex-direction: column; gap: 13px; padding-top: 10px; }
.az-col svg { display: block; }
.collapse { position: absolute; left: 1346px; top: 81px; }

/* formula bar */
.fbar { height: 46px; flex: none; display: flex; padding: 10px 0 0 5px; align-items: flex-start; }
.namebox { width: 102px; height: 26px; border: 1px solid #c6c6c6; position: relative; line-height: 24px; padding-left: 6px; font-size: 12px; color: #333; }
.fdots { width: 2px; height: 10px; margin: 8px 14px 0 14px; border-left: 2px dotted #b0b0b0; }
.fxbox { width: 111px; height: 26px; border: 1px solid #c6c6c6; display: flex; align-items: center; padding-left: 12px; gap: 18px; }
.fx { font: italic 13px "Liberation Serif", serif; color: #555; margin-left: 1px; }
.fx sub { font-size: 9px; vertical-align: -1px; line-height: 0; }
.finput { width: 1111px; margin-left: 2px; height: 26px; border: 1px solid #c6c6c6; line-height: 24px; padding-left: 11px; font-size: 13px; color: #333; position: relative; }
.fexp { position: absolute; right: 3px; top: 9px; }

/* sheet */
.book { height: 485px; flex: none; display: flex; }
.sheet { width: 1347px; height: 485px; overflow: hidden; position: relative; }
.colhead, .row { display: grid; grid-template-columns: 23px 35px 145px 68px 103px 68px 70px 59px 68px; }
.colhead { height: 15px; grid-template-columns: 23px 35px 145px 68px 103px 68px 70px 59px 68px repeat(14, 54px); grid-template-rows: 15px; }
.corner { background: #e6e6e6; border-right: 1px solid #bdbdbd; padding-left: 9px; padding-top: 1px; }
.corner svg { display: block; }
.ch { background: #e6e6e6; text-align: center; line-height: 13px; font-size: 11.5px; color: #444; border-right: 1px solid #c8c8c8; }
.ch.on { color: #217346; font-weight: 700; background: #e1e1e1; border-bottom: 2px solid #217346; }
.ch.lt { background: #fff; color: #555; border-right: 1px solid #dedede; border-bottom: 1px solid #a0a0a0; }
.row { font-size: 12px; color: #222; }
.h23 { height: 23px; } .h24 { height: 24px; } .h25 { height: 25px; } .h26 { height: 26px; } .h27 { height: 27px; }
.rh { display: flex; align-items: flex-end; justify-content: center; line-height: 18px; align-self: stretch; color: #444; background: #fcfcfc; border-right: 1px solid #a0a0a0; border-bottom: 1px solid #dedede; grid-column: 1; }
.rh.sel { background: #e1e1e1; color: #217346; font-weight: 700; border-right: 2px solid #217346; border-bottom-color: #c8c8c8; }
.cell { display: flex; align-items: flex-end; line-height: 20px; white-space: nowrap; overflow: visible; min-width: 0; }
.merged { grid-column: 2 / 10; justify-content: center; font-size: 13px; color: #000; }
.strong { color: #000; font-weight: 600; }
.wide { grid-column: 2 / 10; padding-left: 2px; font-size: 11.6px; }
.th { background: #ff0; border: 1px solid #000; border-left: 0; justify-content: center; color: #111; font-weight: 500; line-height: 18px; }
.th.first { border-left: 1px solid #000; }
.td { border-right: 1px solid #000; border-bottom: 1px solid #000; background: #fff; line-height: 16px; }
.td.first { border-left: 1px solid #000; }
.gr { background: #bfbfbf; }
.mid { justify-content: center; }
.txt { padding-left: 2px; font-size: 11.4px; }
.num { justify-content: flex-end; padding-right: 6px; }
.gen { justify-content: flex-end; padding-right: 4px; }
.num.e { padding-right: 7px; }
.selection { position: absolute; left: 57px; top: 90px; width: 582px; height: 98px; border: 2px solid #217346; pointer-events: none; }
.handle { position: absolute; right: -4px; bottom: -4px; width: 6px; height: 6px; background: #217346; border: 1px solid #fff; }

/* scrollbars */
.vscroll { width: 19px; padding: 1px 3px 0 1px; display: flex; flex-direction: column; height: 488px; position: relative; z-index: 2; }
.sb-btn { height: 16px; border: 1px solid #ababab; background: #fff; display: flex; align-items: center; justify-content: center; flex: none; }
.sb-thumb { height: 432px; background: #fff; border: 1px solid #ababab; border-top: 0; flex: none; }
.sb-track { flex: 1; background: #e9e9e9; }
.tri { width: 0; height: 0; border: 4px solid transparent; flex: none; }
.tri.up { border-top: 0; border-bottom: 5px solid #666; }
.tri.down { border-bottom: 0; border-top: 5px solid #666; }
.tri.left { border-left: 0; border-right: 5px solid #bdbdbd; }
.tri.right { border-right: 0; border-left: 5px solid #bdbdbd; }
.tri.dk.left { border-right-color: #555; }
.tri.dk.right { border-left-color: #555; }
.tri.dk.down { border-top-color: #000; }

/* sheet tab bar */
.sheetbar { height: 28px; flex: none; background: #f5f5f5; display: flex; align-items: flex-start; border-top: 1px solid #ababab; position: relative; z-index: 1; box-shadow: inset 0 -5px 0 #fff; }
.navs { width: 100px; padding: 8px 0 0 26px; display: flex; gap: 24px; }
.stab { width: 65px; height: 24px; margin-top: -1px; background: #fff; border: 1px solid #ababab; border-top-color: #fff; border-bottom: 2px solid #217346; text-align: center; font-weight: 700; font-size: 12px; line-height: 20px; color: #217346; }
.addsheet { width: 15px; height: 15px; margin: 5px 0 0 33px; border: 1px solid #777; border-radius: 50%; line-height: 12px; text-align: center; font-size: 14px; font-weight: 700; color: #666; }
.hdots { width: 2px; height: 12px; margin: 7px 0 0 600px; border-left: 2px dotted #b0b0b0; }
.hscroll { position: absolute; left: 836px; top: 5px; width: 511px; height: 16px; display: flex; }
.sb-btn.h { width: 15px; height: 16px; }
.h-thumb { width: 459px; height: 16px; background: #fff; border: 1px solid #ababab; border-left: 0; }
.h-track { flex: 1; background: #e9e9e9; }

/* status */
.status { height: 22px; flex: none; background: #217346; color: #fff; font-size: 10.8px; display: flex; align-items: center; position: relative; }
.ready { margin-left: 7px; }
.st { position: absolute; top: 3px; white-space: nowrap; }
.st-a { left: 785px; } .st-c { left: 918px; } .st-s { left: 989px; }
.view { position: absolute; top: 1px; width: 38px; height: 21px; display: flex; align-items: center; justify-content: center; }
.view svg { display: block; }
.view.on { left: 1074px; background: #1a5c38; }
.view.v2 { left: 1112px; }
.view.v3 { left: 1150px; }
.zoom { position: absolute; left: 1193px; top: 0; width: 125px; height: 22px; display: flex; align-items: center; }
.zm { width: 10px; font-weight: 700; font-size: 13px; text-align: center; }
.slider { width: 100px; height: 1px; background: #fff; position: relative; }
.mark { position: absolute; left: 50px; top: -3px; width: 1px; height: 7px; background: #fff; }
.knob { position: absolute; left: 40px; top: -5px; width: 4px; height: 11px; background: #fff; }
.zp { margin-left: 3px; font-weight: 700; font-size: 14px; }
.pct { position: absolute; left: 1330px; top: 3px; }

/* taskbar */
.taskbar { height: 44px; flex: none; background: #d4d0c8; border-top: 2px solid #f1efe9; display: flex; padding: 2px 0 0 2px; position: relative; font-family: "Noto Sans", "Open Sans", sans-serif; font-size: 11px; color: #000; }
.tb { width: 70px; height: 38px; flex: none; display: flex; align-items: center; gap: 4px; padding-left: 4px; border: 2px solid; border-color: #fff #777 #777 #fff; white-space: nowrap; overflow: hidden; }
.tb svg { flex: none; display: block; }
.start { width: 52px; font-weight: 700; font-size: 12px; gap: 1px; padding-left: 1px; }
.tight { padding-left: 2px; }
.m1 { margin-left: 1px; } .m2 { margin-left: 2px; } .m3 { margin-left: 3px; } .m9 { margin-left: 9px; }
.active { background: #fff; border-color: #444 #fff #fff #444; font-weight: 700; }
.line { background: #0b2265; color: #fff; padding-left: 1px; gap: 3px; }
.lang { position: absolute; left: 1010px; top: 12px; font-size: 13px; }
.tray { position: absolute; left: 1034px; top: 1px; width: 328px; height: 39px; border: 1px solid; border-color: #777 #fff #fff #777; display: flex; align-items: center; padding-left: 3px; }
.lang::after { content: ""; position: absolute; left: 20px; top: -8px; width: 1px; height: 30px; background: #888; }
.ti { width: 24px; display: flex; justify-content: center; flex: none; }
.ti svg { display: block; }
.clock { width: 76px; margin-left: 1px; text-align: center; line-height: 16px; font-size: 11px; }
.desk { margin-left: 2px; }

/* dialog */
.dialog { position: absolute; left: 654px; top: 252px; width: 600px; height: 275px; background: #d4d0c8; border: 1px solid #fff; outline: 1px solid #777; outline-offset: -1px; box-shadow: inset 0 0 0 2px #d4d0c8; padding: 3px; font-family: "Noto Sans", "Open Sans", sans-serif; font-size: 10.8px; color: #111; }
.dlg-title { height: 18px; background: linear-gradient(90deg, #0a246a, #a6caf0); color: #fff; font-weight: 700; padding-left: 1px; line-height: 17px; display: flex; justify-content: space-between; }
.dlg-btns { display: flex; gap: 1px; padding: 1px 1px 0 0; }
.dlg-b { width: 16px; height: 15px; background: #d4d0c8; border: 1px solid; border-color: #fff #404040 #404040 #fff; color: #000; font-size: 12px; line-height: 13px; text-align: center; display: flex; align-items: center; justify-content: center; }
.dlg-tools { height: 37px; display: flex; align-items: center; position: relative; padding-top: 4px; }
.dlg-tools svg { flex: none; }
.t-lab { white-space: nowrap; color: #222; }
.t-add { margin-left: 14px; margin-right: 2px; }
.t-del { margin-left: 20px; margin-right: 3px; }
.t-copy { margin-left: 21px; margin-right: 4px; }
.t-sep { width: 1px; height: 26px; background: #222; margin-left: 11px; flex: none; }
.tri.t-up { margin-left: 10px; border-width: 0 5px 6px; border-bottom: 6px solid #a8a59d; }
.tri.t-down { margin-left: 18px; border-width: 6px 5px 0; border-top: 6px solid #a8a59d; }
.t-opt { margin-left: 21px; }
.chk { position: absolute; left: 458px; top: 14px; width: 12px; height: 12px; background: #fff; border: 1px solid; border-color: #666 #fff #fff #666; display: flex; align-items: center; justify-content: center; }
.t-hd { position: absolute; left: 478px; top: 12px; }
.dlg-list { width: 578px; height: 178px; margin-left: 7px; background: #fff; border: 1px solid; border-color: #777 #eee #eee #777; position: relative; }
.dl-head { height: 17px; display: flex; background: #d4d0c8; }
.dh { height: 17px; line-height: 17px; padding-left: 3px; border: 1px solid; border-color: #fff #555 #555 #fff; flex: none; }
.dh.c1 { width: 195px; } .dh.c2 { width: 195px; } .dh.c3 { width: 186px; }
.dl-row { height: 24px; background: #e4e4ec; position: relative; }
.sortby { position: absolute; left: 2px; top: 1px; }
.combo { position: absolute; top: 3px; height: 20px; background: #fff; border: 1px solid; border-color: #555 #fff #fff #555; line-height: 16px; padding-left: 2px; white-space: nowrap; overflow: hidden; }
.cb1 { left: 52px; width: 132px; } .cb2 { left: 197px; width: 182px; } .cb3 { left: 392px; width: 182px; }
.cb-arrow { position: absolute; right: 0; top: 0; width: 16px; height: 18px; background: #d4d0c8; border: 1px solid; border-color: #fff #555 #555 #fff; display: flex; align-items: center; justify-content: center; }
.thai-s { font-size: 11px; }
.droplist { position: absolute; left: 52px; top: 40px; width: 133px; height: 114px; background: #fff; border: 1px solid #000; z-index: 2; }
.opt { height: 16px; line-height: 16px; padding: 2px 0 0 2px; white-space: nowrap; }
.opt.hot { background: #9ea6c4; outline: 1px dotted #222; outline-offset: -1px; }
.dlg-foot { display: flex; justify-content: flex-end; gap: 9px; margin-top: 3px; padding-right: 6px; }
.btn { width: 75px; height: 24px; background: #d4d0c8; border: 1px solid; border-color: #fff #404040 #404040 #fff; text-align: center; line-height: 22px; }
.btn.def { outline: 1px solid #000; outline-offset: -1px; box-shadow: inset -1px -1px 0 #000; }
.grip { position: absolute; right: 1px; bottom: 1px; }
```
